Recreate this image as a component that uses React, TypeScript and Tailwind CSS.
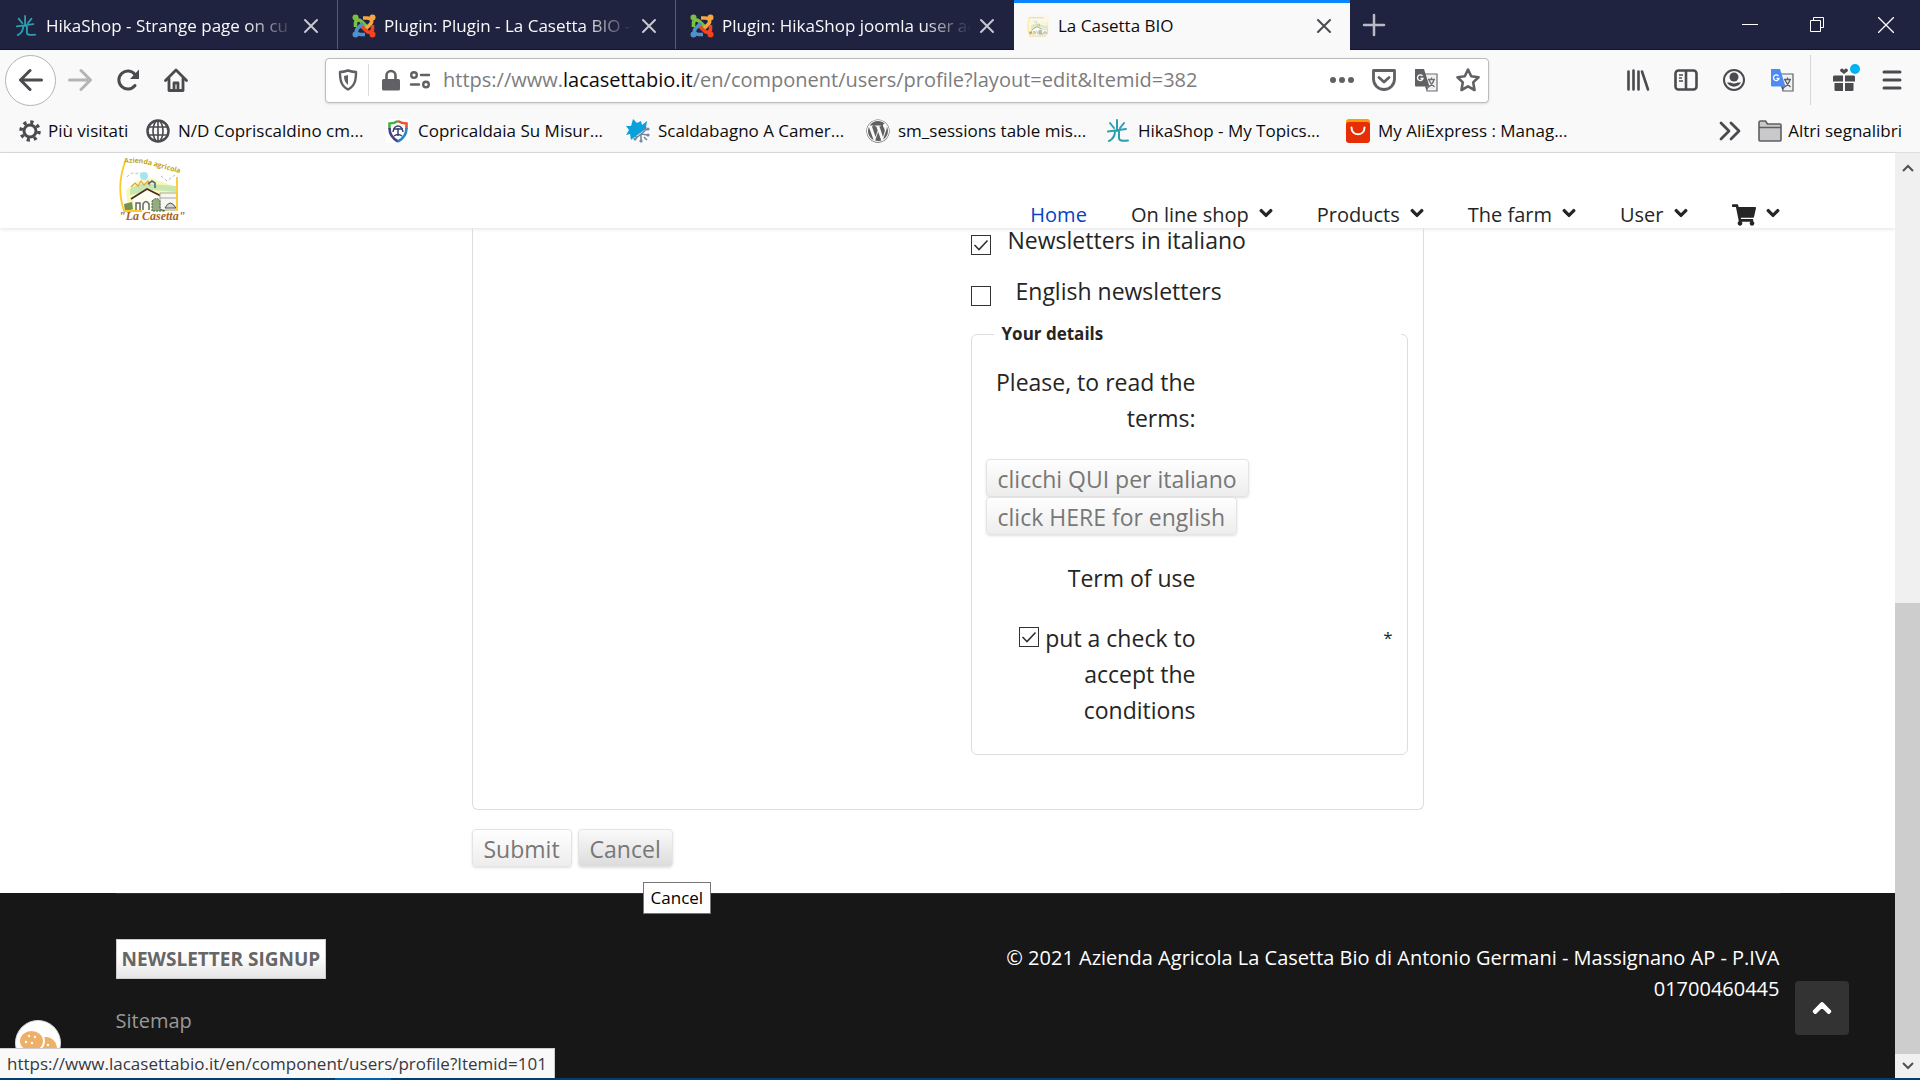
import type { ReactNode } from "react"
import { FaChevronDown, FaChevronUp, FaShoppingCart, FaWordpress } from "react-icons/fa"

// ---------- icons ----------

function HikaIcon({ className }: { className: string }) {
    return (
        <svg viewBox="0 0 24 24" className={className} fill="none" stroke="#2a9fb0" strokeWidth="2" strokeLinecap="round">
            <path d="M11 1v11M4 4l4 5M18 4l-4 5M2 12.500l18-2.500M9 12c0 5-2 8-6 10M13 12v7c0 3 3 3 9 2.500" />
        </svg>
    )
}

function JoomlaIcon() {
    return (
        <svg viewBox="0 0 24 24" className="size-6" fill="none" strokeWidth="3.600" strokeLinejoin="round">
            <path d="M3.500 13V9c0-3 3.500-4 6-1.500l5 5" stroke="#7ac143" />
            <path d="M11 4h4c4 0 6 3 3.500 6l-6 6" stroke="#f9a541" />
            <path d="M20.500 11v4c0 3-3.500 4.500-6 2L9 12" stroke="#f44321" />
            <path d="M13 20.500H9c-4 0-6-3-3.500-6L11 9" stroke="#5091cd" />
            <circle cx="3.500" cy="3.500" r="3" fill="#7ac143" />
            <circle cx="20.500" cy="3.500" r="3" fill="#f9a541" />
            <circle cx="20.500" cy="20.500" r="3" fill="#f44321" />
            <circle cx="3.500" cy="20.500" r="3" fill="#5091cd" />
        </svg>
    )
}

// the house, hills and yellow frame shared by the logo and the favicon
function CasettaScene() {
    return (
        <>
            <path d="M8 35l10-9 16-3 24 9v24H10z" fill="#f4f7a0" opacity="0.700" />
            <path d="M12 34q10-7 22-5l24 2v6l-22-2-24 5z" fill="#c8e6b0" />
            <path d="M13 32l4-4 3 3 3-5 3 4 4-4 2 5" stroke="#e8a13c" strokeWidth="1.200" />
            <path d="M9 22q5-6 9-3 4-3 6 1M43 21l6 5 8-6" stroke="#b9bcc4" strokeDasharray="3 2" />
            <circle cx="26" cy="21" r="4" fill="#a5e6ee" />
            <path d="M15 43l14-9 13 7v16H17z" fill="#fffef2" />
            <path d="M13 44l16-10 14 7" stroke="#4a2a22" strokeWidth="1.600" />
            <path d="M30 29l4-3 3 2v5" stroke="#55627e" strokeWidth="1.600" />
            <path d="M18 55v-7h4v7M25 55v-6q3-5 6 0v6" stroke="#666" strokeWidth="1.500" />
            <path d="M42 38h17v17H42zM42 43h17" fill="#f6f6f2" stroke="#a8a8a2" />
            <path d="M47 53q5-10 11 0z" fill="#d4d4d4" stroke="#4e4e4e" />
            <path d="M6 49l8-2 1 7-8 3z" fill="#76944f" />
            <path d="M34 46q5-5 8 0v8l5 2H34z" fill="#93ad80" stroke="#49613e" strokeDasharray="2 1" />
            <path d="M7 7Q-2 32 6 56h18M59 22v34" stroke="#ffc928" strokeWidth="1.800" />
        </>
    )
}

function CasettaLogo() {
    return (
        <svg viewBox="0 0 64 68" className="h-[68px] w-16 overflow-visible" fill="none">
            <defs>
                <path id="logoArc" d="M6 8Q22 7 36 11T72 21" />
            </defs>
            <CasettaScene />
            <text fontFamily="Open Sans, sans-serif" fontSize="7" fontWeight="700" fill="#bfa51d">
                <textPath href="#logoArc">Azienda agricola</textPath>
            </text>
            <text x="1" y="65" fontFamily="Liberation Serif, serif" fontSize="12" fontWeight="700" fontStyle="italic" fill="#a8651c">
                "La Casetta"
            </text>
        </svg>
    )
}

function CasettaFavicon() {
    return (
        <svg viewBox="0 0 64 64" className="size-[22px] bg-[#fdf8e3] opacity-70" fill="none">
            <CasettaScene />
            <path d="M8 8h40M8 61h48" stroke="#d8b96a" strokeWidth="3" strokeDasharray="5 2" />
        </svg>
    )
}

function CloseIcon({ className }: { className: string }) {
    return (
        <svg viewBox="0 0 16 16" className={className} fill="none" stroke="currentColor" strokeWidth="2" strokeLinecap="round">
            <path d="M2 2l12 12M14 2L2 14" />
        </svg>
    )
}

function TranslateIcon({ front, back }: { front: string; back: string }) {
    return (
        <svg viewBox="0 0 24 24" className="size-6">
            <path d="M10 6h13v17H13z" fill="#f1f1f1" stroke={back} strokeWidth="1.200" />
            <path d="M14 11.500h7M17.500 9.500v2M20 11.500c-1 4-3 6-5.500 7.500M15 12c1 3 3 5 5.500 7" fill="none" stroke={back} strokeWidth="1.300" />
            <path d="M1 1h9l5.500 17.500H2a1 1 0 0 1-1-1z" fill={front} />
            <path d="M11 18.500h4.500l-3 4z" fill={back} />
            <path d="M8.500 8A2.800 2.800 0 1 0 9 10.500H6.500" fill="none" stroke="#fff" strokeWidth="1.300" />
        </svg>
    )
}

function BackIcon() {
    return (
        <svg viewBox="0 0 24 24" className="size-6" fill="none" stroke="currentColor" strokeWidth="3" strokeLinecap="round" strokeLinejoin="round">
            <path d="M22.500 12H2M11 2.500L1.500 12l9.500 9.500" />
        </svg>
    )
}

function ForwardIcon() {
    return (
        <svg viewBox="0 0 24 24" className="size-6" fill="none" stroke="currentColor" strokeWidth="3" strokeLinecap="round" strokeLinejoin="round">
            <path d="M1.500 12H22M13 2.500l9.500 9.500-9.500 9.500" />
        </svg>
    )
}

function ReloadIcon() {
    return (
        <svg viewBox="0 0 24 24" className="size-6" fill="none" stroke="currentColor" strokeWidth="3" strokeLinecap="round">
            <path d="M19 17.500A9 9 0 1 1 19 6.500" />
            <path d="M23 1.500v9.500h-9z" fill="currentColor" stroke="none" />
        </svg>
    )
}

function HomeIcon() {
    return (
        <svg viewBox="0 0 24 24" className="size-6" fill="none" stroke="currentColor" strokeWidth="2.800" strokeLinecap="round" strokeLinejoin="round">
            <path d="M1.500 12.500L12 2l10.500 10.500M5 11v11.500h14V11" />
            <path d="M10 22v-7h4v7" />
        </svg>
    )
}

function ShieldIcon() {
    return (
        <svg viewBox="0 0 20 22" className="h-[22px] w-5" fill="none" stroke="currentColor" strokeWidth="2.400" strokeLinejoin="round">
            <path d="M10 1.500c3 1 5 1.500 8 1.500 0 8-1 14-8 17.500C3 17 2 11 2 3c3 0 5-.5 8-1.500z" />
            <path d="M10 6v10c-3-2.500-4-5-4-9z" fill="currentColor" stroke="none" />
        </svg>
    )
}

function LockIcon() {
    return (
        <svg viewBox="0 0 20 22" className="h-[22px] w-5" fill="none">
            <path d="M5.500 11V6.500a4.500 4.500 0 0 1 9 0V11" stroke="currentColor" strokeWidth="2.600" />
            <rect x="1" y="10" width="18" height="11.500" rx="1.500" fill="currentColor" />
        </svg>
    )
}

function PermissionsIcon() {
    return (
        <svg viewBox="0 0 22 20" className="h-5 w-[22px]" fill="none" stroke="currentColor" strokeWidth="2.400" strokeLinecap="round">
            <circle cx="5" cy="5" r="2.800" />
            <path d="M12 5h8M2 14.500h8" />
            <circle cx="17" cy="14.500" r="2.800" />
        </svg>
    )
}

function DotsIcon() {
    return (
        <svg viewBox="0 0 24 24" className="size-6" fill="currentColor">
            <circle cx="3" cy="12" r="3" />
            <circle cx="12" cy="12" r="3" />
            <circle cx="21" cy="12" r="3" />
        </svg>
    )
}

function PocketIcon() {
    return (
        <svg viewBox="0 0 24 24" className="size-6" fill="none" stroke="currentColor" strokeWidth="2.800" strokeLinecap="round" strokeLinejoin="round">
            <path d="M1.500 2.500h21V11a10.500 10.500 0 0 1-21 0z" />
            <path d="M7 9.500l5 4.500 5-4.500" />
        </svg>
    )
}

function StarIcon() {
    return (
        <svg viewBox="0 0 24 24" className="size-6" fill="none" stroke="currentColor" strokeWidth="2.600" strokeLinejoin="round">
            <path d="M12 1.500l3.200 6.800 7.300 1-5.300 5.100 1.300 7.600-6.500-3.700L5.500 22l1.300-7.600L1.500 9.300l7.300-1z" />
        </svg>
    )
}

function LibraryIcon() {
    return (
        <svg viewBox="0 0 24 24" className="size-6" fill="none" stroke="currentColor" strokeWidth="2.600" strokeLinecap="round">
            <path d="M2.500 3.500v18M7.500 2.500v19M12.500 3.500v18M16 3.500l6 18" />
        </svg>
    )
}

function SidebarIcon() {
    return (
        <svg viewBox="0 0 24 24" className="size-6" fill="none" stroke="currentColor" strokeWidth="2.600">
            <rect x="1.500" y="2.500" width="21" height="19" rx="3" />
            <path d="M12 3v18" />
            <path d="M5 7h4M5 10h3M5 13h4" strokeWidth="1.500" />
        </svg>
    )
}

function AccountIcon() {
    return (
        <svg viewBox="0 0 24 24" className="size-6" fill="none">
            <circle cx="12" cy="12" r="10" stroke="currentColor" strokeWidth="2" />
            <circle cx="12" cy="9" r="4.500" fill="currentColor" />
            <path d="M5 14.500h3.500q3.500 2 7 0H19a8 8 0 0 1-14 0z" fill="currentColor" />
        </svg>
    )
}

function GiftIcon() {
    return (
        <svg viewBox="0 0 24 24" className="size-6" fill="currentColor">
            <path d="M2 7.500h9v6H1V8.500zM13 7.500h9l1 1v5H13zM2.500 15H11v8H3.500a1 1 0 0 1-1-1zM13 15h8.500v7a1 1 0 0 1-1 1H13z" />
            <path d="M12 6L8 3q0-3 2.500-2.500L12 2l1.500-1.500Q16 0 16 3z" />
        </svg>
    )
}

function MenuIcon() {
    return (
        <svg viewBox="0 0 20 20" className="size-5" stroke="currentColor" strokeWidth="3" strokeLinecap="round">
            <path d="M2 2h16M2 10h16M2 18h16" />
        </svg>
    )
}

function GearIcon() {
    return (
        <svg viewBox="0 0 24 24" className="size-6" fill="none" stroke="#4a4a4f">
            <circle cx="12" cy="12" r="6" strokeWidth="3" />
            <circle cx="12" cy="12" r="9" strokeWidth="3.500" strokeDasharray="3.200 3.870" />
        </svg>
    )
}

function GlobeIcon() {
    return (
        <svg viewBox="0 0 24 24" className="size-6" fill="none" stroke="#4a4a4f" strokeWidth="1.600">
            <circle cx="12" cy="12" r="10.500" strokeWidth="2.500" />
            <ellipse cx="12" cy="12" rx="5" ry="10.500" />
            <path d="M12 1v22M2 8h20M2 16h20" />
        </svg>
    )
}

function ColorShieldIcon() {
    return (
        <svg viewBox="0 0 24 24" className="size-6" fill="none" strokeWidth="2.600">
            <path d="M0 0h24v24H0z" fill="#fff" />
            <path d="M12 2C9 4 6 4.500 3.500 4.500V10" stroke="#45b149" />
            <path d="M12 2c3 2 6 2.500 8.500 2.500V10" stroke="#f0512d" />
            <path d="M3.500 9c0 7 3 10.500 8.500 13.500" stroke="#4b3f86" />
            <path d="M20.500 9c0 7-3 10.500-8.500 13.500" stroke="#2b86c8" />
            <path d="M7 13q1-6 5-6t5 6M7 10h10M12 9v8M8 17q4-3 8 0" stroke="#38426f" strokeWidth="1.500" />
        </svg>
    )
}

function SnowSunIcon() {
    return (
        <svg viewBox="0 0 24 24" className="size-6" fill="none">
            <path d="M7 0l4 4 4-2 1 4 5-4-1 6 1 1L6 20l-1 1-1-6-4 1 3-5-3-4h5z" fill="#0aa0dc" />
            <path d="M21 10L9 20M15 15l7 1M15 15v8M19 11v-2M11 18l-2-1M18 18l3 3" stroke="#75899b" strokeWidth="1.600" />
            <g fill="#75899b">
                <circle cx="22" cy="10" r="1.600" />
                <circle cx="22" cy="16" r="1.600" />
                <circle cx="15" cy="22" r="1.600" />
                <circle cx="9" cy="20" r="1.600" />
            </g>
        </svg>
    )
}

function AliIcon() {
    return (
        <svg viewBox="0 0 24 24" className="size-6" fill="none">
            <rect width="24" height="22" rx="3" fill="#ff9a00" />
            <rect y="3" width="24" height="21" rx="3" fill="#e62e04" />
            <path d="M5.500 8.500c0 9 13 9 13 0" stroke="#fff" strokeWidth="2" strokeLinecap="round" />
        </svg>
    )
}

function FolderIcon() {
    return (
        <svg viewBox="0 0 24 22" className="h-[22px] w-6" fill="#c9c9cb" stroke="#5f5f62" strokeWidth="1.600" strokeLinejoin="round">
            <path d="M1 20V2.500Q1 1 2.500 1h5l2 3H22q1 0 1 1v15q0 1-1 1H2q-1 0-1-1zM1 7.500h22" />
        </svg>
    )
}

function CookieIcon() {
    return (
        <svg viewBox="0 0 46 46" className="size-[46px]">
            <circle cx="23" cy="23" r="22.500" fill="#fff" stroke="#d9d9d9" />
            <ellipse cx="31" cy="29" rx="11" ry="12" fill="#eeb067" />
            <ellipse cx="16.500" cy="21" rx="12.500" ry="11" fill="#eeb067" stroke="#fff" strokeWidth="2" />
            <g fill="#fff">
                <circle cx="14" cy="16" r="1.200" />
                <circle cx="20" cy="17" r="1.200" />
                <circle cx="11" cy="22" r="1.200" />
                <circle cx="17" cy="23" r="1.200" />
                <circle cx="33" cy="25" r="1.200" />
                <circle cx="34" cy="31" r="1.200" />
            </g>
        </svg>
    )
}

// ---------- browser chrome ----------

const tabs = [
    { title: "HikaShop - Strange page on cu", icon: <HikaIcon className="size-[22px]" /> },
    { title: "Plugin: Plugin - La Casetta BIO -", icon: <JoomlaIcon /> },
    { title: "Plugin: HikaShop joomla user ac", icon: <JoomlaIcon /> },
    { title: "La Casetta BIO", icon: <CasettaFavicon />, active: true },
]

const bookmarks = [
    { title: "N/D Copriscaldino cm...", icon: <GlobeIcon /> },
    { title: "Copricaldaia Su Misur...", icon: <ColorShieldIcon /> },
    { title: "Scaldabagno A Camer...", icon: <SnowSunIcon /> },
    { title: "sm_sessions table mis...", icon: <FaWordpress className="size-6 text-[#5f5f5f]" /> },
    { title: "HikaShop - My Topics...", icon: <HikaIcon className="size-6" /> },
    { title: "My AliExpress : Manag...", icon: <AliIcon /> },
]

function TabBar() {
    return (
        <div className="flex h-[50px] border-b border-[#12142c] bg-[#20233f]">
            {tabs.map((tab) => (
                <div
                    key={tab.title}
                    className={
                        tab.active
                            ? "-mb-px flex w-[336px] items-center border-t-3 border-[#0a84ff] bg-[#f9f9fa] pr-4 pb-px pl-3 text-[#0c0c0d]"
                            : "flex w-[338px] items-center border-r border-[#5a5c72] pt-0.5 pr-4 pl-3.5 text-[#f9f9fa] nth-3:border-transparent"
                    }
                >
                    <span className="flex w-6 justify-center">{tab.icon}</span>
                    <span
                        className={
                            tab.active
                                ? "ml-2 flex-1 overflow-hidden text-[17px] whitespace-nowrap"
                                : "ml-2 flex-1 overflow-hidden mask-r-from-80% mask-r-to-100% text-[17px] whitespace-nowrap"
                        }
                    >
                        {tab.title}
                    </span>
                    <button aria-label="Close tab" className={tab.active ? "ml-2 p-0.5 text-[#4a4a4f]" : "ml-1.5 p-0.5 text-[#c6c7d0]"}>
                        <CloseIcon className="size-4" />
                    </button>
                </div>
            ))}
            <button aria-label="New tab" className="ml-3 text-[#b9bac6]">
                <svg viewBox="0 0 24 24" className="size-6" stroke="currentColor" strokeWidth="2.500" strokeLinecap="round">
                    <path d="M12 2v20M2 12h20" />
                </svg>
            </button>
            <div className="ml-auto flex items-center gap-[52px] pr-[26px] text-white">
                <button aria-label="Minimize">
                    <svg viewBox="0 0 16 16" className="size-4" stroke="currentColor">
                        <path d="M0 7.500h16" />
                    </svg>
                </button>
                <button aria-label="Restore">
                    <svg viewBox="0 0 16 16" className="size-4" fill="none" stroke="currentColor">
                        <path d="M.5 3.500h10v11H.5zM3.500 3.500v-3h10v10h-3" />
                    </svg>
                </button>
                <button aria-label="Close window">
                    <svg viewBox="0 0 16 16" className="size-4" stroke="currentColor" strokeWidth="1.300">
                        <path d="M0 0l16 16M16 0L0 16" />
                    </svg>
                </button>
            </div>
        </div>
    )
}

function ToolButton({ label, children }: { label: string; children: ReactNode }) {
    return (
        <button aria-label={label} className="relative flex size-6 items-center justify-center">
            {children}
        </button>
    )
}

function Toolbar() {
    return (
        <div className="flex h-[60px] items-center pr-4 pl-[5px] text-[#4a4a4f]">
            <button aria-label="Back" className="flex size-[51px] items-center justify-center rounded-full border border-[#b4b4b6] bg-white">
                <BackIcon />
            </button>
            <div className="ml-3 flex gap-6">
                <button aria-label="Forward" className="text-[#b4b4b6]">
                    <ForwardIcon />
                </button>
                <ToolButton label="Reload"><ReloadIcon /></ToolButton>
                <ToolButton label="Home"><HomeIcon /></ToolButton>
            </div>
            {/* address bar */}
            <div className="ml-[137px] flex h-[45px] max-w-[1164px] flex-1 items-center rounded-sm border border-[#bcbcbd] bg-white pr-2 pl-3 text-[#616165] shadow-sm">
                <ShieldIcon />
                <span className="ml-2.5 h-8 w-px bg-[#dcdcdd]" />
                <span className="ml-3 flex items-center gap-2">
                    <LockIcon />
                    <PermissionsIcon />
                </span>
                <p className="ml-3 flex-1 text-[20px] whitespace-nowrap text-[#7c7c7e]">
                    https://www.<span className="text-[#0c0c0d]">lacasettabio.it</span>/en/component/users/profile?layout=edit&amp;Itemid=382
                </p>
                <div className="flex gap-[18px]">
                    <ToolButton label="Page actions"><DotsIcon /></ToolButton>
                    <ToolButton label="Save to Pocket"><PocketIcon /></ToolButton>
                    <ToolButton label="Translate this page"><TranslateIcon front="#616165" back="#6d6d70" /></ToolButton>
                    <ToolButton label="Bookmark this page"><StarIcon /></ToolButton>
                </div>
            </div>
            <div className="ml-auto flex items-center gap-6">
                <ToolButton label="Library"><LibraryIcon /></ToolButton>
                <ToolButton label="Sidebars"><SidebarIcon /></ToolButton>
                <ToolButton label="Account"><AccountIcon /></ToolButton>
                <ToolButton label="Google Translate"><TranslateIcon front="#4c8bf5" back="#5c6068" /></ToolButton>
            </div>
            <span className="ml-4 h-[50px] w-px bg-[#d7d7db]" />
            <div className="ml-[21px] flex items-center gap-6">
                <ToolButton label="What's new">
                    <GiftIcon />
                    <span className="absolute -top-1 -right-1 size-2.5 rounded-full bg-[#00b3f4]" />
                </ToolButton>
                <ToolButton label="Menu"><MenuIcon /></ToolButton>
            </div>
        </div>
    )
}

function BookmarksBar() {
    return (
        <div className="flex h-[43px] items-center border-b border-[#dedee0] pr-[18px] pl-[18px] text-[17px] whitespace-nowrap text-[#0c0c0d]">
            <a href="#" className="flex w-32 items-center gap-1.5">
                <GearIcon />
                Più visitati
            </a>
            {bookmarks.map((b) => (
                <a key={b.title} href="#" className="flex w-60 items-center gap-2">
                    {b.icon}
                    {b.title}
                </a>
            ))}
            <div className="ml-auto flex items-center">
                <button aria-label="More bookmarks" className="mr-4">
                    <svg viewBox="0 0 24 24" className="size-6" fill="none" stroke="#4a4a4f" strokeWidth="2.800" strokeLinecap="round" strokeLinejoin="round">
                        <path d="M3 4l8 8-8 8M13 4l8 8-8 8" />
                    </svg>
                </button>
                <a href="#" className="flex items-center gap-1.5">
                    <FolderIcon />
                    Altri segnalibri
                </a>
            </div>
        </div>
    )
}

function Scrollbar() {
    return (
        <div className="flex w-[25px] flex-col bg-[#f0f0f0] text-[#505050]">
            <span className="flex h-[30px] items-center justify-center">
                <svg viewBox="0 0 12 8" className="h-2 w-3" fill="none" stroke="currentColor" strokeWidth="2">
                    <path d="M1 7l5-5 5 5" />
                </svg>
            </span>
            <span className="flex-[420]" />
            <span className="flex-[451] bg-[#cdcdcd]" />
            <span className="flex h-6 items-center justify-center">
                <svg viewBox="0 0 12 8" className="h-2 w-3" fill="none" stroke="currentColor" strokeWidth="2">
                    <path d="M1 1l5 5 5-5" />
                </svg>
            </span>
        </div>
    )
}

// ---------- site ----------

const menu = ["On line shop", "Products", "The farm", "User"]

function MenuChevron() {
    return <FaChevronDown className="mb-1 size-3.5 stroke-current stroke-[40px]" />
}

function SiteHeader() {
    return (
        <header className="h-[75px] bg-white px-6 shadow-[0_1px_4px_rgba(0,0,0,0.12)]">
            <div className="mx-auto flex h-full max-w-[1664px] items-end justify-between">
                <a href="#" aria-label="La Casetta" className="self-start pt-0.5 pl-0.5">
                    <CasettaLogo />
                </a>
                <nav className="flex gap-11 pb-px text-[20px] leading-6 text-[#252525]">
                    <a href="#" className="text-[#0345bf]">Home</a>
                    {menu.map((item) => (
                        <a key={item} href="#" className="flex items-center gap-2.5">
                            {item}
                            <MenuChevron />
                        </a>
                    ))}
                    <a href="#" aria-label="Cart" className="flex items-center gap-2.5">
                        <FaShoppingCart className="size-6" />
                        <MenuChevron />
                    </a>
                </nav>
            </div>
        </header>
    )
}

function Checkbox({ id, checked }: { id: string; checked?: boolean }) {
    return (
        <span className="inline-grid size-5 shrink-0">
            <input
                id={id}
                type="checkbox"
                defaultChecked={checked}
                className="peer col-start-1 row-start-1 size-5 appearance-none border border-[#333] bg-white"
            />
            <svg
                viewBox="0 0 20 20"
                className="pointer-events-none invisible col-start-1 row-start-1 size-5 peer-checked:visible"
                fill="none"
                stroke="#333"
                strokeWidth="1.600"
            >
                <path d="M3.500 10l4.500 4.500 8.500-9" />
            </svg>
        </span>
    )
}

function GreyButton({ children, hovered }: { children: ReactNode; hovered?: boolean }) {
    return (
        <button
            type="button"
            className={
                hovered
                    ? "h-[38px] rounded-sm border border-[#e4e4e4] bg-linear-to-b from-[#fafafa] to-[#dcdcdc] px-[11px] pt-0.5 text-[#777] shadow-sm"
                    : "h-[38px] rounded-sm border border-[#e4e4e4] bg-linear-to-b from-white to-[#ededed] px-[11px] pt-0.5 text-[#777] shadow-sm"
            }
        >
            {children}
        </button>
    )
}

function ProfileForm() {
    return (
        <form className="mx-auto w-full max-w-[952px] pb-[26px] text-[23px] text-[#252525]">
            <div className="rounded-b-md border-x border-b border-[#ddd] pr-[15px] pb-[54px]">
                <div className="ml-auto w-[437px]">
                    <div className="flex h-[51px] items-start gap-[17px]">
                        <span className="flex pt-[7px]"><Checkbox id="news-it" checked /></span>
                        <label htmlFor="news-it" className="leading-6">Newsletters in italiano</label>
                    </div>
                    <div className="flex h-[41px] items-start gap-[25px]">
                        <span className="flex pt-[7px]"><Checkbox id="news-en" /></span>
                        <label htmlFor="news-en" className="leading-6">English newsletters</label>
                    </div>
                    <fieldset className="rounded-md border border-[#ddd] px-3.5 pb-[26px]">
                        <legend className="ml-2 w-full px-2 text-[17px] leading-7 font-bold">Your details</legend>
                        <p className="mt-4 w-[210px] text-right leading-9">Please, to read the terms:</p>
                        <div className="mt-[23px] flex flex-col items-start">
                            <GreyButton>clicchi QUI per italiano</GreyButton>
                            <GreyButton>click HERE for english</GreyButton>
                        </div>
                        <p className="mt-[25px] w-[210px] text-right leading-9">Term of use</p>
                        <div className="mt-6 flex items-start justify-between leading-9">
                            <div className="w-[210px] text-right">
                                <span className="mr-1.5 inline-flex align-baseline"><Checkbox id="terms" checked /></span>
                                <label htmlFor="terms">put a check to accept the conditions</label>
                            </div>
                            <span className="text-[17px]">*</span>
                        </div>
                    </fieldset>
                </div>
            </div>
            <div className="mt-[19px] flex gap-1.5">
                <GreyButton>Submit</GreyButton>
                <div className="relative flex">
                    <GreyButton hovered>Cancel</GreyButton>
                    <span className="absolute top-[53px] left-[65px] z-10 border border-[#767676] bg-white px-[7px] text-[17px] leading-[30px] text-black">
                        Cancel
                    </span>
                </div>
            </div>
        </form>
    )
}

function SiteFooter() {
    return (
        <footer className="relative flex-1 bg-[#171717] px-6 text-[20px]">
            <div className="mx-auto flex max-w-[1664px] justify-between border-t border-[#303030] pb-10">
                <div className="flex flex-col items-start pt-[45px]">
                    <button className="h-10 border border-[#ccc] bg-linear-to-b from-white from-40% to-[#e6e6e6] px-[5px] text-[19px] font-bold text-[#666]">
                        NEWSLETTER SIGNUP
                    </button>
                    <a href="#" className="mt-[26px] leading-[31px] text-[#999]">Sitemap</a>
                </div>
                <p className="max-w-[800px] pt-12 text-right leading-[31px] text-white">
                    © 2021 Azienda Agricola La Casetta Bio di Antonio Germani - Massignano AP - P.IVA 01700460445
                </p>
            </div>
            <button aria-label="Cookie settings" className="absolute bottom-3 left-[15px]">
                <CookieIcon />
            </button>
            <a href="#" aria-label="Back to top" className="absolute right-[46px] bottom-[43px] flex size-[54px] items-center justify-center rounded-sm bg-[#333] text-white">
                <FaChevronUp className="size-5 stroke-current stroke-[40px]" />
            </a>
            <span className="absolute bottom-0 left-0 border-t border-r border-[#ccc] bg-[#f9f9fa] px-[7px] text-[17px] leading-[29px] whitespace-nowrap text-[#38383d]">
                https://www.lacasettabio.it/en/component/users/profile?Itemid=101
            </span>
        </footer>
    )
}

export default function App() {
    return (
        <div className="flex min-h-screen flex-col bg-white font-['Open_Sans','Noto_Sans',sans-serif]">
            <div className="bg-[#f9f9fa]">
                <TabBar />
                <Toolbar />
                <BookmarksBar />
            </div>
            <div className="flex flex-1">
                <main className="flex flex-1 flex-col">
                    <SiteHeader />
                    <ProfileForm />
                    <SiteFooter />
                </main>
                <Scrollbar />
            </div>
            {/* top edge of the taskbar */}
            <div className="flex h-0.5 bg-[#003f75]">
                <span className="ml-[335px] w-14 bg-[#0063b1]" />
            </div>
        </div>
    )
}
